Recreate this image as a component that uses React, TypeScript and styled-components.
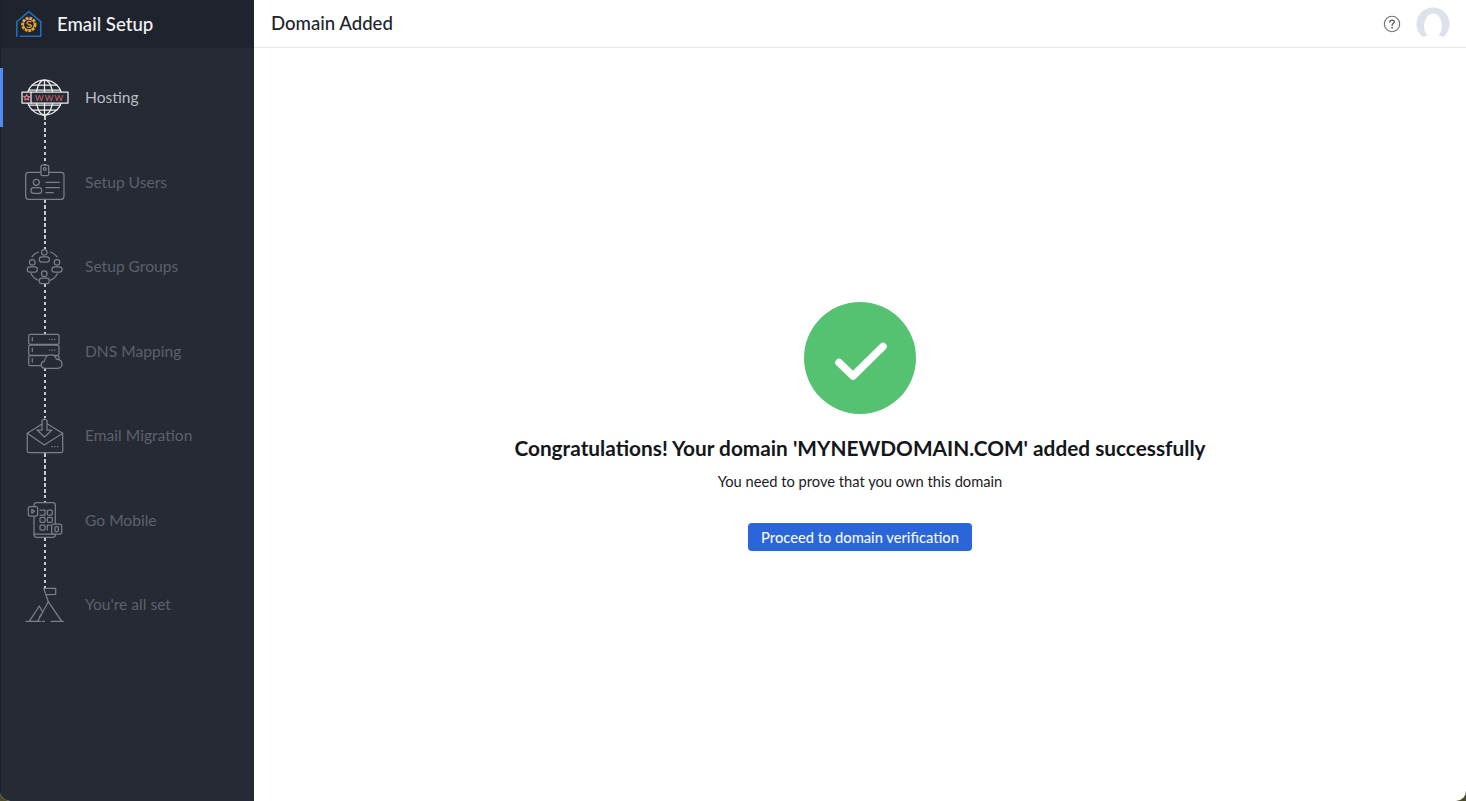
import React from "react";
import styled, { createGlobalStyle } from "styled-components";

const Global = createGlobalStyle`
  html, body { margin: 0; padding: 0; height: 100%; background: #4d4a28; }
  #root { height: 100%; }
  * { box-sizing: border-box; }
`;

const Window = styled.div`
  display: flex;
  width: 1466px;
  height: 801px;
  overflow: hidden;
  border-radius: 0 0 10px 10px;
  background: #fff;
  font-family: Lato, "Liberation Sans", sans-serif;
`;

const Sidebar = styled.aside`
  flex: 0 0 254px;
  display: flex;
  flex-direction: column;
  background: #252a35;
  border-left: 1px solid #1b1f27;
`;

const Brand = styled.div`
  flex: 0 0 48px;
  display: flex;
  align-items: center;
  gap: 14px;
  padding-left: 13px;
  background: #1e232d;
  color: #f2f3f5;
  font-size: 18.6px;
  font-weight: 500;
`;

const StepList = styled.ol`
  list-style: none;
  margin: 0;
  padding: 8px 0 0;
  display: grid;
  grid-auto-rows: 84.5px;
`;

const Step = styled.li<{ $active?: boolean }>`
  position: relative;
  display: flex;
  align-items: center;
  gap: 15px;
  padding-left: 18px;
  font-size: 15.6px;
  color: ${(p) => (p.$active ? "#b9bcc3" : "#5c616c")};
`;

const StepLabel = styled.span`
  margin-bottom: 2px;
`;

const ActiveBar = styled.span`
  position: absolute;
  left: -1px;
  top: 12px;
  width: 3px;
  height: 59px;
  background: #4f8df0;
`;

const Connector = styled.span<{ $top: number; $height: number }>`
  position: absolute;
  left: 43px;
  top: ${(p) => p.$top}px;
  width: 1.5px;
  height: ${(p) => p.$height}px;
  background: repeating-linear-gradient(to bottom, #c9cace 0 3.5px, transparent 3.5px 6px);
`;

const IconSlot = styled.svg<{ $active?: boolean }>`
  position: relative;
  flex: 0 0 51px;
  width: 51px;
  height: 50px;
  fill: none;
  stroke: ${(p) => (p.$active ? "#eceded" : "#7b7f87")};
  stroke-width: 1.25;
  stroke-linecap: round;
  stroke-linejoin: round;
`;

const Main = styled.main`
  flex: 1;
  display: flex;
  flex-direction: column;
  min-width: 0;
`;

const Header = styled.header`
  flex: 0 0 48px;
  display: flex;
  align-items: center;
  justify-content: space-between;
  padding: 0 16px 0 17px;
  border-bottom: 1px solid #e6e6e6;
  overflow: hidden;
`;

const PageTitle = styled.h1`
  margin: 0 0 1px;
  font-size: 18.6px;
  font-weight: 500;
  color: #20242b;
`;

const HeaderTools = styled.div`
  display: flex;
  align-items: center;
  gap: 15px;
`;

const Content = styled.section`
  flex: 1;
  display: flex;
  flex-direction: column;
  align-items: center;
  padding-top: 254px;
`;

const Heading = styled.h2`
  margin: 21px 0 0;
  font-size: 20.8px;
  line-height: 26px;
  font-weight: 700;
  color: #14161a;
`;

const Sub = styled.p`
  margin: 10px 0 0;
  font-size: 14.7px;
  line-height: 20px;
  color: #1d2025;
`;

const PrimaryButton = styled.button`
  margin-top: 32px;
  width: 224px;
  height: 28px;
  padding: 0 0 1px;
  border: 0;
  border-radius: 4px;
  background: #2a66da;
  color: #f4f7fd;
  font-family: inherit;
  font-size: 14.7px;
  font-weight: 500;
`;

const Logo = () => (
  <svg width="29" height="29" viewBox="0 0 26 26" fill="none">
    <path d="M3 23.5h-.5V10.5L13.3 1.500l10.700 9v13H5" stroke="#1f6db5" strokeWidth="1.500" strokeLinejoin="round" />
    <circle cx="13.3" cy="13" r="5.800" stroke="#e8a52c" strokeWidth="2.200" strokeDasharray="2.400 1" />
    <circle cx="13.3" cy="13" r="4.800" stroke="#e8a52c" strokeWidth="1" />
    <path d="M15.600 10.800c-1-.8-4-.9-4 .8 0 1.900 4 .9 4 2.800 0 1.400-2.800 1.400-4.200.6" stroke="#e8a52c" strokeWidth="1.200" />
  </svg>
);

const GlobeIcon = () => (
  <IconSlot $active viewBox="0 0 51 50">
    <circle cx="25.5" cy="24.5" r="17.5" />
    <ellipse cx="25.5" cy="24.500" rx="8.500" ry="17.500" />
    <path d="M25.500 7v35M13 12h25M9.500 17h32M9.500 32h32M13 37h25" />
    <rect x="3" y="19" width="46" height="11" fill="#252a35" />
    <path d="M12 19v11" />
    <path d="M7.700 21.600l.9 1.900 2 .2-1.500 1.300.5 2-1.900-1-1.900 1 .5-2-1.500-1.300 2-.2z" stroke="#e0747c" />
    <text x="16" y="28" fontFamily="Lato, sans-serif" fontSize="8.400" letterSpacing="1.100" fill="#d8666f" stroke="none">WWW</text>
  </IconSlot>
);

const CardIcon = () => (
  <IconSlot viewBox="0 0 51 50">
    <rect x="6.700" y="14.300" width="38.300" height="27" rx="3" />
    <rect x="22" y="7" width="7.700" height="10.700" rx="1.200" fill="#252a35" />
    <circle cx="25.800" cy="11" r="1.400" />
    <circle cx="17.300" cy="24.300" r="3" />
    <rect x="12" y="29.700" width="10.700" height="5.600" rx="2.600" />
    <path d="M27 24.300h13.300M27 29.700h13.300M27 34.700h7.300" />
  </IconSlot>
);

const Person = ({ hx, hy, r = 2.8 }: { hx: number; hy: number; r?: number }) => (
  <>
    <circle cx={hx} cy={hy} r={r} />
    <rect x={hx - 5} y={hy + 4.5} width="10" height="5.400" rx="2.400" />
  </>
);

const GroupIcon = () => (
  <IconSlot viewBox="0 0 51 50">
    <Person hx={25.3} hy={10.3} />
    <Person hx={13.3} hy={20.3} />
    <Person hx={38} hy={20.3} />
    <Person hx={25.3} hy={31.7} />
    <path d="M13 14.800c1.300-2 3.500-3.800 6.400-4.800M31.300 10c3 1 5.300 2.700 6.600 4.800M12 31.500c1.500 3.200 4 5.500 7 6.700M38.500 31.500c-1.500 3.200-4 5.500-7 6.700" />
  </IconSlot>
);

const ServerIcon = () => (
  <IconSlot viewBox="0 0 51 50">
    <rect x="9.700" y="7.300" width="30.300" height="10" rx="1.500" />
    <rect x="9.700" y="18" width="30.300" height="10.300" rx="1.500" />
    <rect x="9.700" y="28.700" width="30.300" height="10" rx="1.500" />
    <path d="M13.300 10.500v3.500M13.300 21v3.500M13.300 31.700v3.500M30.500 12.300h.4M33 12.300h.4M35.500 12.300h.4M30.500 23h.4M33 23h.4M35.500 23h.4" />
    <path
      d="M26.300 41.300c-2.400 0-4-1.600-4-3.600 0-1.900 1.300-3.300 3.200-3.600.4-3.600 3-6.300 6.300-6.300 2.800 0 5 1.800 5.700 4.500 3.300-.2 5.500 2 5.500 4.800 0 2.500-2 4.200-4.400 4.200z"
      fill="#252a35"
    />
  </IconSlot>
);

const MailIcon = () => (
  <IconSlot viewBox="0 0 51 50">
    <path d="M23 13L8.300 22.300V40a1.700 1.700 0 0 0 1.700 1.700h32a1.700 1.700 0 0 0 1.700-1.700V22.300L28.500 13" />
    <path d="M8.300 22.300L25.300 34l18.400-11.700" />
    <path d="M23 19V9.500l2.500-1.800 2.500 1.800V19h5l-7.500 7-7.500-7z" />
    <path d="M32.700 35.700h.4M35.500 35.700h.4M38.500 35.700h.4" />
  </IconSlot>
);

const MobileIcon = () => (
  <IconSlot viewBox="0 0 51 50">
    <rect x="15" y="6.700" width="21.300" height="34.600" rx="2.500" />
    <path d="M15 38h21" />
    <rect x="9.300" y="10.700" width="9.400" height="9.300" rx="2" fill="#252a35" />
    <path d="M12.800 13.500v3.600l2.800-1.800z" />
    <path d="M21 14h5v5h-5" />
    <rect x="28.300" y="14" width="5" height="5" rx="1" />
    <rect x="21" y="21.300" width="5" height="5" rx="1" />
    <rect x="28.300" y="21.300" width="5" height="5" rx="1" />
    <rect x="21" y="29" width="5" height="5" rx="1" />
    <path d="M28.300 34v-5h3" />
    <rect x="32.700" y="28" width="10" height="10" rx="2" fill="#252a35" />
    <rect x="36" y="30.500" width="3.400" height="5" rx="1" />
  </IconSlot>
);

const PeakIcon = () => (
  <IconSlot viewBox="0 0 51 50">
    <path d="M24.700 8.300l4.600 13.400" />
    <path d="M24.700 8.300h12v6l-9.500.4" />
    <path d="M18.700 41.300L29.300 21.700 42.700 41.300" />
    <path d="M10.300 41.300L20.300 26l3 5.500" />
    <path d="M7 41.300h14.500M23.500 41.300h2M32 41.300h12.300" />
    <path d="M20.500 37l1.300-2" />
  </IconSlot>
);

const HelpIcon = () => (
  <svg width="18" height="18" viewBox="0 0 18 18" fill="none">
    <circle cx="9" cy="9" r="7.700" stroke="#6f7277" strokeWidth="1.100" />
    <path d="M6.800 7.200c0-1.300 1-2.100 2.300-2.100s2.200.8 2.200 1.900c0 1.600-2.200 1.600-2.200 3.300" stroke="#55585d" strokeWidth="1.300" strokeLinecap="round" />
    <circle cx="9.100" cy="12.700" r=".9" fill="#55585d" />
  </svg>
);

const Avatar = () => (
  <svg width="34" height="34" viewBox="0 0 34 34">
    <circle cx="17" cy="17" r="16.500" fill="#dde1ea" />
    <ellipse cx="17" cy="19" rx="9" ry="12.500" fill="#fff" />
    <path d="M2 32c5-3 9-4 15-4s10 1 15 4v2H2z" fill="#fff" />
  </svg>
);

const CheckBadge = () => (
  <svg width="112" height="112" viewBox="0 0 112 112">
    <circle cx="56" cy="56" r="56" fill="#54c270" />
    <path d="M35 60.500L49 74 79 44.500" fill="none" stroke="#fff" strokeWidth="7.500" strokeLinecap="round" strokeLinejoin="round" />
  </svg>
);

const steps = [
  { label: "Hosting", Icon: GlobeIcon, active: true, line: [60, 50] },
  { label: "Setup Users", Icon: CardIcon, line: [58, 50] },
  { label: "Setup Groups", Icon: GroupIcon, line: [59, 50] },
  { label: "DNS Mapping", Icon: ServerIcon, line: [58, 50] },
  { label: "Email Migration", Icon: MailIcon, line: [59, 50] },
  { label: "Go Mobile", Icon: MobileIcon, line: [59, 50] },
  { label: "You're all set", Icon: PeakIcon },
];

export default function App() {
  return (
    <>
      <Global />
      <Window>
        <Sidebar>
          <Brand>
            <Logo />
            Email Setup
          </Brand>
          <StepList>
            {steps.map(({ label, Icon, active, line }) => (
              <Step key={label} $active={active}>
                {active && <ActiveBar />}
                {line && <Connector $top={line[0]} $height={line[1]} />}
                <Icon />
                <StepLabel>{label}</StepLabel>
              </Step>
            ))}
          </StepList>
        </Sidebar>
        <Main>
          <Header>
            <PageTitle>Domain Added</PageTitle>
            <HeaderTools>
              <HelpIcon />
              <Avatar />
            </HeaderTools>
          </Header>
          <Content>
            <CheckBadge />
            <Heading>Congratulations! Your domain 'MYNEWDOMAIN.COM' added successfully</Heading>
            <Sub>You need to prove that you own this domain</Sub>
            <PrimaryButton>Proceed to domain verification</PrimaryButton>
          </Content>
        </Main>
      </Window>
    </>
  );
}
